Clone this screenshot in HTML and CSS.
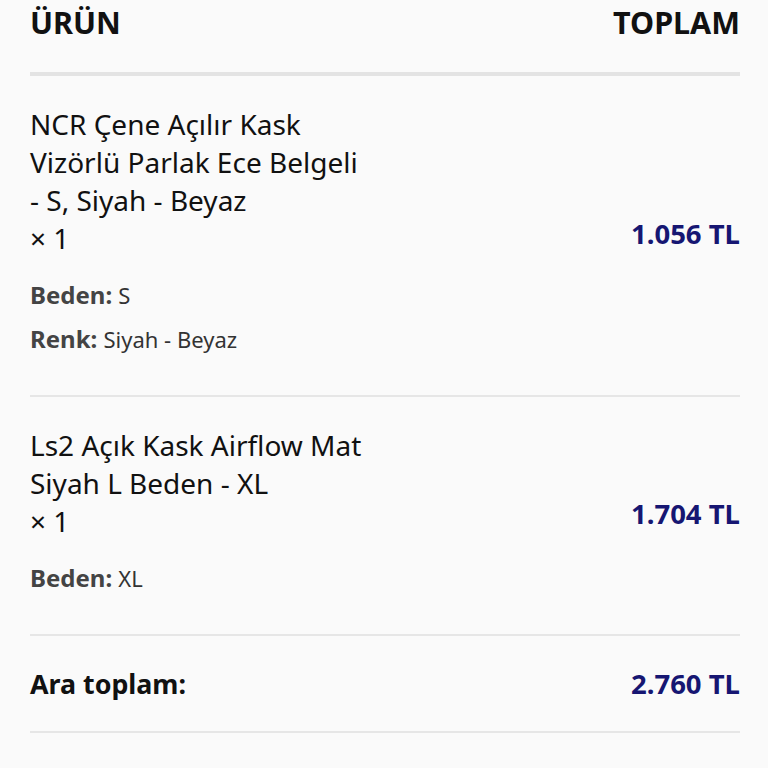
FILE: index.html
```html
<!DOCTYPE html>
<html lang="tr">
<head>
<meta charset="utf-8">
<link rel="stylesheet" href="styles.css">
</head>
<body>
<div class="review">
  <div class="row head">
    <div class="th">ÜRÜN</div>
    <div class="th">TOPLAM</div>
  </div>
  <div class="row item">
    <div class="product">
      <div class="name">NCR Çene Açılır Kask<br>Vizörlü Parlak Ece Belgeli<br>- S, Siyah - Beyaz<br><span class="qty">× 1</span></div>
      <dl class="meta">
        <div class="meta-line"><dt>Beden:</dt> <dd>S</dd></div>
        <div class="meta-line"><dt>Renk:</dt> <dd>Siyah - Beyaz</dd></div>
      </dl>
    </div>
    <div class="price">1.056 TL</div>
  </div>
  <div class="row item">
    <div class="product">
      <div class="name">Ls2 Açık Kask Airflow Mat<br>Siyah L Beden - XL<br><span class="qty">× 1</span></div>
      <dl class="meta">
        <div class="meta-line"><dt>Beden:</dt> <dd>XL</dd></div>
      </dl>
    </div>
    <div class="price">1.704 TL</div>
  </div>
  <div class="row subtotal">
    <div class="label">Ara toplam:</div>
    <div class="price">2.760 TL</div>
  </div>
  <div class="row next"></div>
</div>
</body>
</html>
```
FILE: styles.css
```css
html, body {
  margin: 0;
  padding: 0;
  background: #fafafa;
}
body {
  font-family: "Noto Sans", "Open Sans", sans-serif;
  color: #111;
}
.review {
  padding: 0 28px 0 30px;
}
.row {
  display: flex;
  justify-content: space-between;
  align-items: center;
  border-bottom: 2px solid #e6e6e6;
}
.head {
  align-items: flex-start;
  padding: 2px 0 30px;
  border-bottom: 4px solid #e3e3e3;
}
.th {
  font-size: 30.5px;
  line-height: 40px;
  font-weight: 700;
  color: #111;
}
.item {
  padding: 29px 0 34px;
}
.name {
  font-size: 28px;
  line-height: 38px;
  color: #111;
}
.meta {
  margin: 16px 0 0;
  color: #444;
}
.meta-line {
  line-height: 44px;
  height: 44px;
}
.meta dt {
  display: inline;
  font-size: 24px;
  font-weight: 700;
  color: #444;
}
.meta dd {
  display: inline;
  margin: 0 0 0 2px;
  font-size: 22px;
  color: #333;
}
.price {
  font-size: 27.5px;
  font-weight: 700;
  color: #161672;
}
.subtotal {
  height: 95px;
}
.label {
  font-size: 26.8px;
  font-weight: 700;
  color: #111;
}
.next {
  height: 40px;
  border-bottom: none;
}
```
